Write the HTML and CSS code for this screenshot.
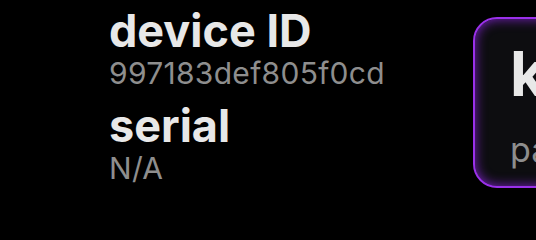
FILE: index.html
```html
<!DOCTYPE html>
<html lang="en">

<head>
    <meta charset="UTF-8">
    <meta name="viewport" content="width=device-width, initial-scale=1.0">
    <title>Device info</title>
    <link rel="stylesheet" href="styles.css">
</head>

<body>
    <div class="layout">
        <div class="info">
            <div class="field">
                <div class="field-label">device ID</div>
                <div class="field-value">997183def805f0cd</div>
            </div>
            <div class="field">
                <div class="field-label">serial</div>
                <div class="field-value">N/A</div>
            </div>
        </div>

        <div class="card">
            <div class="card-title">key</div>
            <div class="card-sub">paired</div>
        </div>
    </div>
</body>

</html>
```

FILE: styles.css
```css
body {
    font-family: Inter, 'Liberation Sans', Arial, sans-serif;
    margin: 0;
    background-color: #000;
    color: #e8e8e8;
    overflow: hidden;
}

.layout {
    display: flex;
    align-items: flex-start;
    padding-left: 109px;
    gap: 88px;
}

.info {
    display: flex;
    flex-direction: column;
    gap: 11px;
    padding-top: 6px;
    width: 276px;
    flex-shrink: 0;
}

.field-label {
    font-size: 45px;
    font-weight: 700;
    line-height: 50px;
}

.field-value {
    font-size: 30px;
    letter-spacing: 0.3px;
    color: #8e8e8e;
    line-height: 34px;
}

.card {
    margin-top: 17px;
    width: 300px;
    height: 171px;
    flex-shrink: 0;
    box-sizing: border-box;
    background-color: #0d0d10;
    border: 2px solid #9a30ea;
    border-radius: 24px;
    box-shadow: inset 0 0 12px rgba(150, 40, 240, 0.8);
    padding: 20px 0 0 35px;
}

.card-title {
    font-size: 62px;
    font-weight: 700;
    line-height: 70px;
}

.card-sub {
    font-size: 34px;
    color: #8e8e8e;
    margin-top: 20px;
}
```
